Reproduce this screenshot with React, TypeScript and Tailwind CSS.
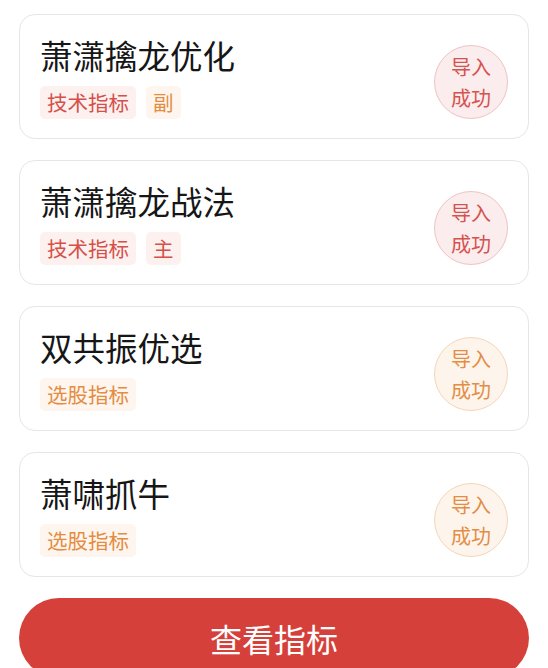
import React from 'react'

type Tag = { text: string; tone: 'red' | 'orange' }

const items: { title: string; tags: Tag[]; tone: 'red' | 'orange' }[] = [
  { title: '萧潇擒龙优化', tags: [{ text: '技术指标', tone: 'red' }, { text: '副', tone: 'orange' }], tone: 'red' },
  { title: '萧潇擒龙战法', tags: [{ text: '技术指标', tone: 'red' }, { text: '主', tone: 'red' }], tone: 'red' },
  { title: '双共振优选', tags: [{ text: '选股指标', tone: 'orange' }], tone: 'orange' },
  { title: '萧啸抓牛', tags: [{ text: '选股指标', tone: 'orange' }], tone: 'orange' },
]

function Badge({ tone }: { tone: 'red' | 'orange' }) {
  const cls =
    tone === 'red'
      ? 'border-[#efc3c4] bg-[#fbeced] text-[#d5524e]'
      : 'border-[#f5d6b6] bg-[#fdf4ec] text-[#e38d45]'
  return (
    <div className={`w-[74px] h-[74px] shrink-0 rounded-full border flex flex-col items-center justify-center text-[20px] leading-[31px] ${cls}`}>
      <span>导入</span>
      <span>成功</span>
    </div>
  )
}

export default function App() {
  return (
    <div
      className="min-h-screen bg-white px-[19px] pt-[14px] flex flex-col gap-[21px]"
      style={{ fontFamily: '"Noto Sans CJK SC", "Noto Sans", sans-serif' }}
    >
      {items.map((item, i) => (
        <div
          key={i}
          className="h-[125px] rounded-[16px] border border-[#e6e6e6] bg-white pl-[20px] pr-[20px] pt-[18px] pb-[19px] flex items-end justify-between"
        >
          <div className="flex flex-col gap-[11px]">
            <div className="text-[32.5px] leading-[40px] text-[#161616]">{item.title}</div>
            <div className="flex gap-[10px]">
              {item.tags.map((t, j) => (
                <span
                  key={j}
                  className={`h-[33px] px-[7px] rounded-[5px] flex items-center text-[20.5px] ${
                    t.tone === 'red' ? 'bg-[#fdf1f0] text-[#d6504a]' : 'bg-[#fef6ee] text-[#e38c42]'
                  }`}
                >
                  {t.text}
                </span>
              ))}
            </div>
          </div>
          <Badge tone={item.tone} />
        </div>
      ))}
      <button className="h-[80px] shrink-0 rounded-full bg-[#d6403a] text-white text-[32px]">
        查看指标
      </button>
    </div>
  )
}
